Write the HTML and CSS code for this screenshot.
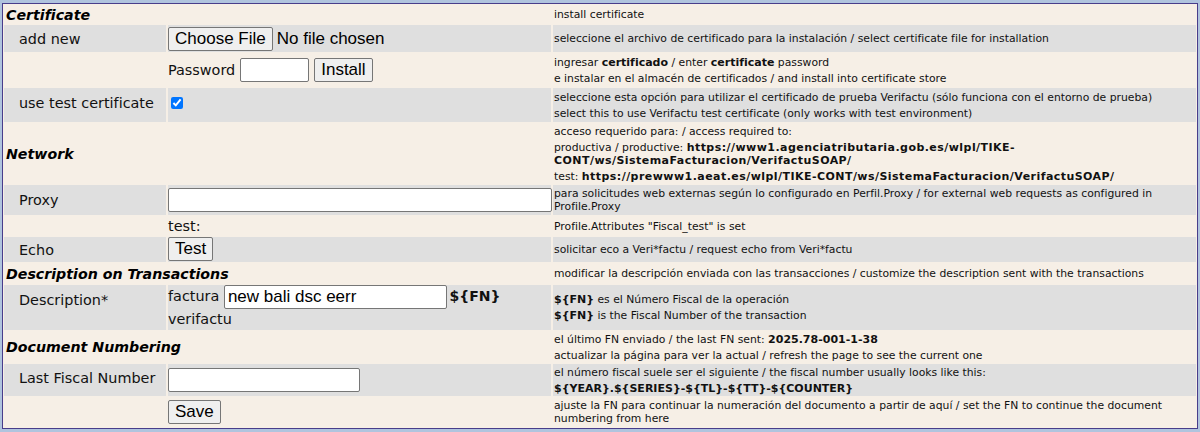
FILE: index.html
```html
<!DOCTYPE html>
<html lang="es">
<head>
<meta charset="utf-8">
<title>Verifactu settings</title>
<link rel="stylesheet" href="styles.css">
</head>
<body>
<div class="panel">
  <div class="grid">
    <!-- Certificate -->
    <div class="cell head">Certificate</div>
    <div class="cell desc"><p>install certificate</p></div>

    <div class="cell label g">add new</div>
    <div class="cell ctl g"><input type="file" class="file"></div>
    <div class="cell desc g"><p>seleccione el archivo de certificado para la instalación / select certificate file for installation</p></div>

    <div class="cell"></div>
    <div class="cell ctl"><div class="inline"><span class="txt">Password</span><input type="password" class="inp pw"><button class="btn" type="button">Install</button></div></div>
    <div class="cell desc"><p>ingresar <b>certificado</b> / enter <b>certificate</b> password</p><p>e instalar en el almacén de certificados / and install into certificate store</p></div>

    <div class="cell label g lift">use test certificate</div>
    <div class="cell ctl g"><input type="checkbox" class="chk" checked></div>
    <div class="cell desc g"><p>seleccione esta opción para utilizar el certificado de prueba Verifactu (sólo funciona con el entorno de prueba)</p><p>select this to use Verifactu test certificate (only works with test environment)</p></div>

    <!-- Network -->
    <div class="cell head">Network</div>
    <div class="cell desc"><p>acceso requerido para: / access required to:</p><p>productiva / productive: <b class="url">https://www1.agenciatributaria.gob.es/wlpl/TIKE-CONT/ws/SistemaFacturacion/VerifactuSOAP/</b></p><p>test: <b class="url">https://prewww1.aeat.es/wlpl/TIKE-CONT/ws/SistemaFacturacion/VerifactuSOAP/</b></p></div>

    <div class="cell label g">Proxy</div>
    <div class="cell ctl g"><input type="text" class="inp proxy"></div>
    <div class="cell desc g"><p>para solicitudes web externas según lo configurado en Perfil.Proxy / for external web requests as configured in Profile.Proxy</p></div>

    <div class="cell"></div>
    <div class="cell ctl"><span class="txt">test:</span></div>
    <div class="cell desc"><p>Profile.Attributes "Fiscal_test" is set</p></div>

    <div class="cell label g">Echo</div>
    <div class="cell ctl g top"><div class="inline"><button class="btn" type="button">Test</button></div></div>
    <div class="cell desc g"><p>solicitar eco a Veri*factu / request echo from Veri*factu</p></div>

    <!-- Description -->
    <div class="cell head">Description on Transactions</div>
    <div class="cell desc"><p>modificar la descripción enviada con las transacciones / customize the description sent with the transactions</p></div>

    <div class="cell label g top lbl-base">Description*</div>
    <div class="cell ctl g top"><div class="flowtext">factura <input type="text" class="inp descr" value="new bali dsc eerr"> <b class="fn">${FN}</b> verifactu</div></div>
    <div class="cell desc g"><p><b>${FN}</b> es el Número Fiscal de la operación</p><p><b>${FN}</b> is the Fiscal Number of the transaction</p></div>

    <!-- Document Numbering -->
    <div class="cell head">Document Numbering</div>
    <div class="cell desc"><p>el último FN enviado / the last FN sent: <b>2025.78-001-1-38</b></p><p>actualizar la página para ver la actual / refresh the page to see the current one</p></div>

    <div class="cell label g lift">Last Fiscal Number</div>
    <div class="cell ctl g"><input type="text" class="inp lfn"></div>
    <div class="cell desc g"><p>el número fiscal suele ser el siguiente / the fiscal number usually looks like this:</p><p><b>${YEAR}.${SERIES}-${TL}-${TT}-${COUNTER}</b></p></div>

    <div class="cell"></div>
    <div class="cell ctl"><div class="inline"><button class="btn" type="button">Save</button></div></div>
    <div class="cell desc"><p>ajuste la FN para continuar la numeración del documento a partir de aquí / set the FN to continue the document numbering from here</p></div>
  </div>
</div>
</body>
</html>
```

FILE: styles.css
```css
html, body {
  height: 100%;
}
body {
  margin: 3px 2px 0 2px;
  background: #b0c4de;
  font-family: "DejaVu Sans", sans-serif;
  color: #111;
}
.panel {
  border: 1px solid #483d8b;
  background: #f6efe6;
}
.grid {
  display: grid;
  grid-template-columns: 162px 383px 1fr;
  grid-template-rows: 21px 27px 36px 34px 63px 30px 22px 25px 23px 45px 34px 32px 32px;
  column-gap: 2px;
  padding: 0 1px;
}
.cell {
  display: flex;
  flex-direction: column;
  justify-content: center;
  min-width: 0;
}
.cell.top {
  justify-content: flex-start;
}
.g {
  background: #dfdfdf;
}
.head {
  grid-column: span 2;
  font-weight: bold;
  font-style: italic;
  font-size: 14.2px;
  padding-left: 2px;
  color: #000;
  white-space: nowrap;
}
.label {
  font-size: 14.4px;
  padding-left: 15px;
}
.lift {
  padding-bottom: 4px;
}
.lbl-base {
  padding-top: 7px;
}
.desc {
  font-size: 10.8px;
  line-height: 13px;
  padding-left: 1px;
}
.desc p {
  margin: 0;
}
.desc p + p {
  margin-top: 3px;
}
.desc b {
  font-size: 11px;
}
.desc .url {
  letter-spacing: 0.45px;
}
.ctl {
  font-size: 14.4px;
}
.inline {
  display: flex;
  align-items: center;
}
.txt {
  font-size: 14.4px;
}
.inp {
  font-family: "Liberation Sans", Arial, sans-serif;
  font-size: 17px;
  border: 1px solid #767676;
  border-radius: 2px;
  padding: 1px 3px;
  background: #fff;
  box-sizing: border-box;
  height: 24px;
  margin: 0;
}
.pw {
  width: 69px;
  margin-left: 5px;
}
.proxy {
  width: 384px;
}
.lfn {
  width: 192px;
}
.descr {
  width: 223px;
  vertical-align: middle;
}
.btn {
  font-family: "Liberation Sans", Arial, sans-serif;
  font-size: 17px;
  border: 1px solid #767676;
  border-radius: 2px;
  background: #efefef;
  color: #000;
  padding: 0 6px;
  height: 24px;
  margin: 0 0 0 5px;
}
.ctl .inline > .btn:first-child {
  margin-left: 0;
}
.file {
  font-family: "Liberation Sans", Arial, sans-serif;
  font-size: 17px;
  color: #000;
  margin: 0;
}
.file::file-selector-button {
  font-family: "Liberation Sans", Arial, sans-serif;
  font-size: 17px;
  border: 1px solid #767676;
  border-radius: 2px;
  background: #efefef;
  padding: 0 6px;
  height: 24px;
  margin-right: 4px;
}
.chk {
  margin: 0 0 4px 3px;
  width: 12px;
  height: 12px;
}
.flowtext {
  font-size: 14.4px;
  line-height: 21px;
}
.fn {
  font-size: 14px;
  margin-left: -2px;
}
```
